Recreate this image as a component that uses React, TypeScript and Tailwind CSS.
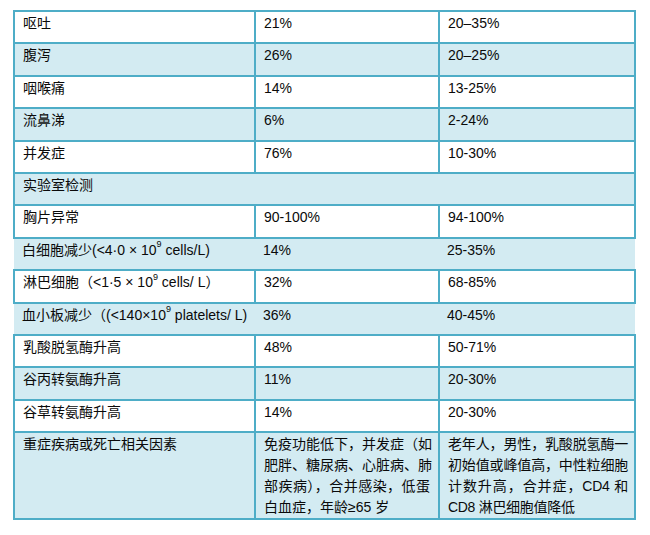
import React from 'react';

type Row = {
  name: React.ReactNode;
  a?: string;
  b?: string;
  blue: boolean;
  open?: boolean; // rows drawn without side borders
  span?: boolean;
};

const sup9 = <sup className="text-[9px] align-[3px] leading-none">9</sup>;

const rows: Row[] = [
  { name: '呕吐', a: '21%', b: '20–35%', blue: false },
  { name: '腹泻', a: '26%', b: '20–25%', blue: true },
  { name: '咽喉痛', a: '14%', b: '13-25%', blue: false },
  { name: '流鼻涕', a: '6%', b: '2-24%', blue: true },
  { name: '并发症', a: '76%', b: '10-30%', blue: false },
  { name: '实验室检测', blue: true, span: true },
  { name: '胸片异常', a: '90-100%', b: '94-100%', blue: false },
  {
    name: <>白细胞减少(&lt;4·0 × 10{sup9} cells/L)</>,
    a: '14%',
    b: '25-35%',
    blue: true,
    open: true,
  },
  { name: <>淋巴细胞（&lt;1·5 × 10{sup9} cells/ L）</>, a: '32%', b: '68-85%', blue: false },
  {
    name: <>血小板减少（(&lt;140×10{sup9} platelets/ L)</>,
    a: '36%',
    b: '40-45%',
    blue: true,
    open: true,
  },
  { name: '乳酸脱氢酶升高', a: '48%', b: '50-71%', blue: false },
  { name: '谷丙转氨酶升高', a: '11%', b: '20-30%', blue: true },
  { name: '谷草转氨酶升高', a: '14%', b: '20-30%', blue: false },
];

const col2Lines = ['免疫功能低下，并发症（如', '肥胖、糖尿病、心脏病、肺', '部疾病），合并感染，低蛋', '白血症，年龄≥65 岁'];
const col3Lines = ['老年人，男性，乳酸脱氢酶一', '初始值或峰值高，中性粒细胞', '计数升高，合并症，CD4 和', 'CD8 淋巴细胞值降低'];

const Lines = ({ lines, tight }: { lines: string[]; tight?: boolean }) => (
  <div className={tight ? 'tracking-[-0.3px]' : ''}>
    {lines.map((l, i) => (
      <div
        key={i}
        className={`whitespace-nowrap ${i < lines.length - 1 ? 'text-justify [text-align-last:justify]' : ''}`}
      >
        {l}
      </div>
    ))}
  </div>
);

export default function App() {
  const cell = 'align-top px-2 pt-[1px] leading-[20px]';
  return (
    <div
      className="min-h-screen bg-white pl-[13px] pt-[10px] text-[14px] text-[#0a0a0a]"
      style={{ fontFamily: '"Liberation Sans", "Noto Sans CJK SC", sans-serif' }}
    >
      <table className="w-[621px] table-fixed border-collapse">
        <colgroup>
          <col className="w-[241px]" />
          <col className="w-[184px]" />
          <col className="w-[196px]" />
        </colgroup>
        <tbody>
          {rows.map((r, i) => {
            const bg = r.blue ? 'bg-[#d3ebf2]' : 'bg-white';
            const bd = r.open
              ? 'border-y-2 border-x-0 border-[#4eadc7]'
              : 'border-2 border-[#4eadc7]';
            if (r.span) {
              return (
                <tr key={i} className="h-[32.4px]">
                  <td colSpan={3} className={`${cell} ${bg} ${bd}`}>
                    {r.name}
                  </td>
                </tr>
              );
            }
            return (
              <tr key={i} className="h-[32.4px]">
                <td className={`${cell} ${bg} ${bd} whitespace-nowrap`}>{r.name}</td>
                <td className={`${cell} ${bg} ${bd}`}>{r.a}</td>
                <td className={`${cell} ${bg} ${bd}`}>{r.b}</td>
              </tr>
            );
          })}
          <tr className="h-[87px]">
            <td className="align-top px-2 pt-[1px] leading-[21px] bg-[#d3ebf2] border-2 border-[#4eadc7]">
              重症疾病或死亡相关因素
            </td>
            <td className="align-top px-2 pt-[1px] leading-[21px] bg-[#d3ebf2] border-2 border-[#4eadc7]">
              <Lines lines={col2Lines} />
            </td>
            <td className="align-top pl-2 pr-[6px] pt-[1px] leading-[21px] bg-[#d3ebf2] border-2 border-[#4eadc7]">
              <Lines lines={col3Lines} tight />
            </td>
          </tr>
        </tbody>
      </table>
    </div>
  );
}
